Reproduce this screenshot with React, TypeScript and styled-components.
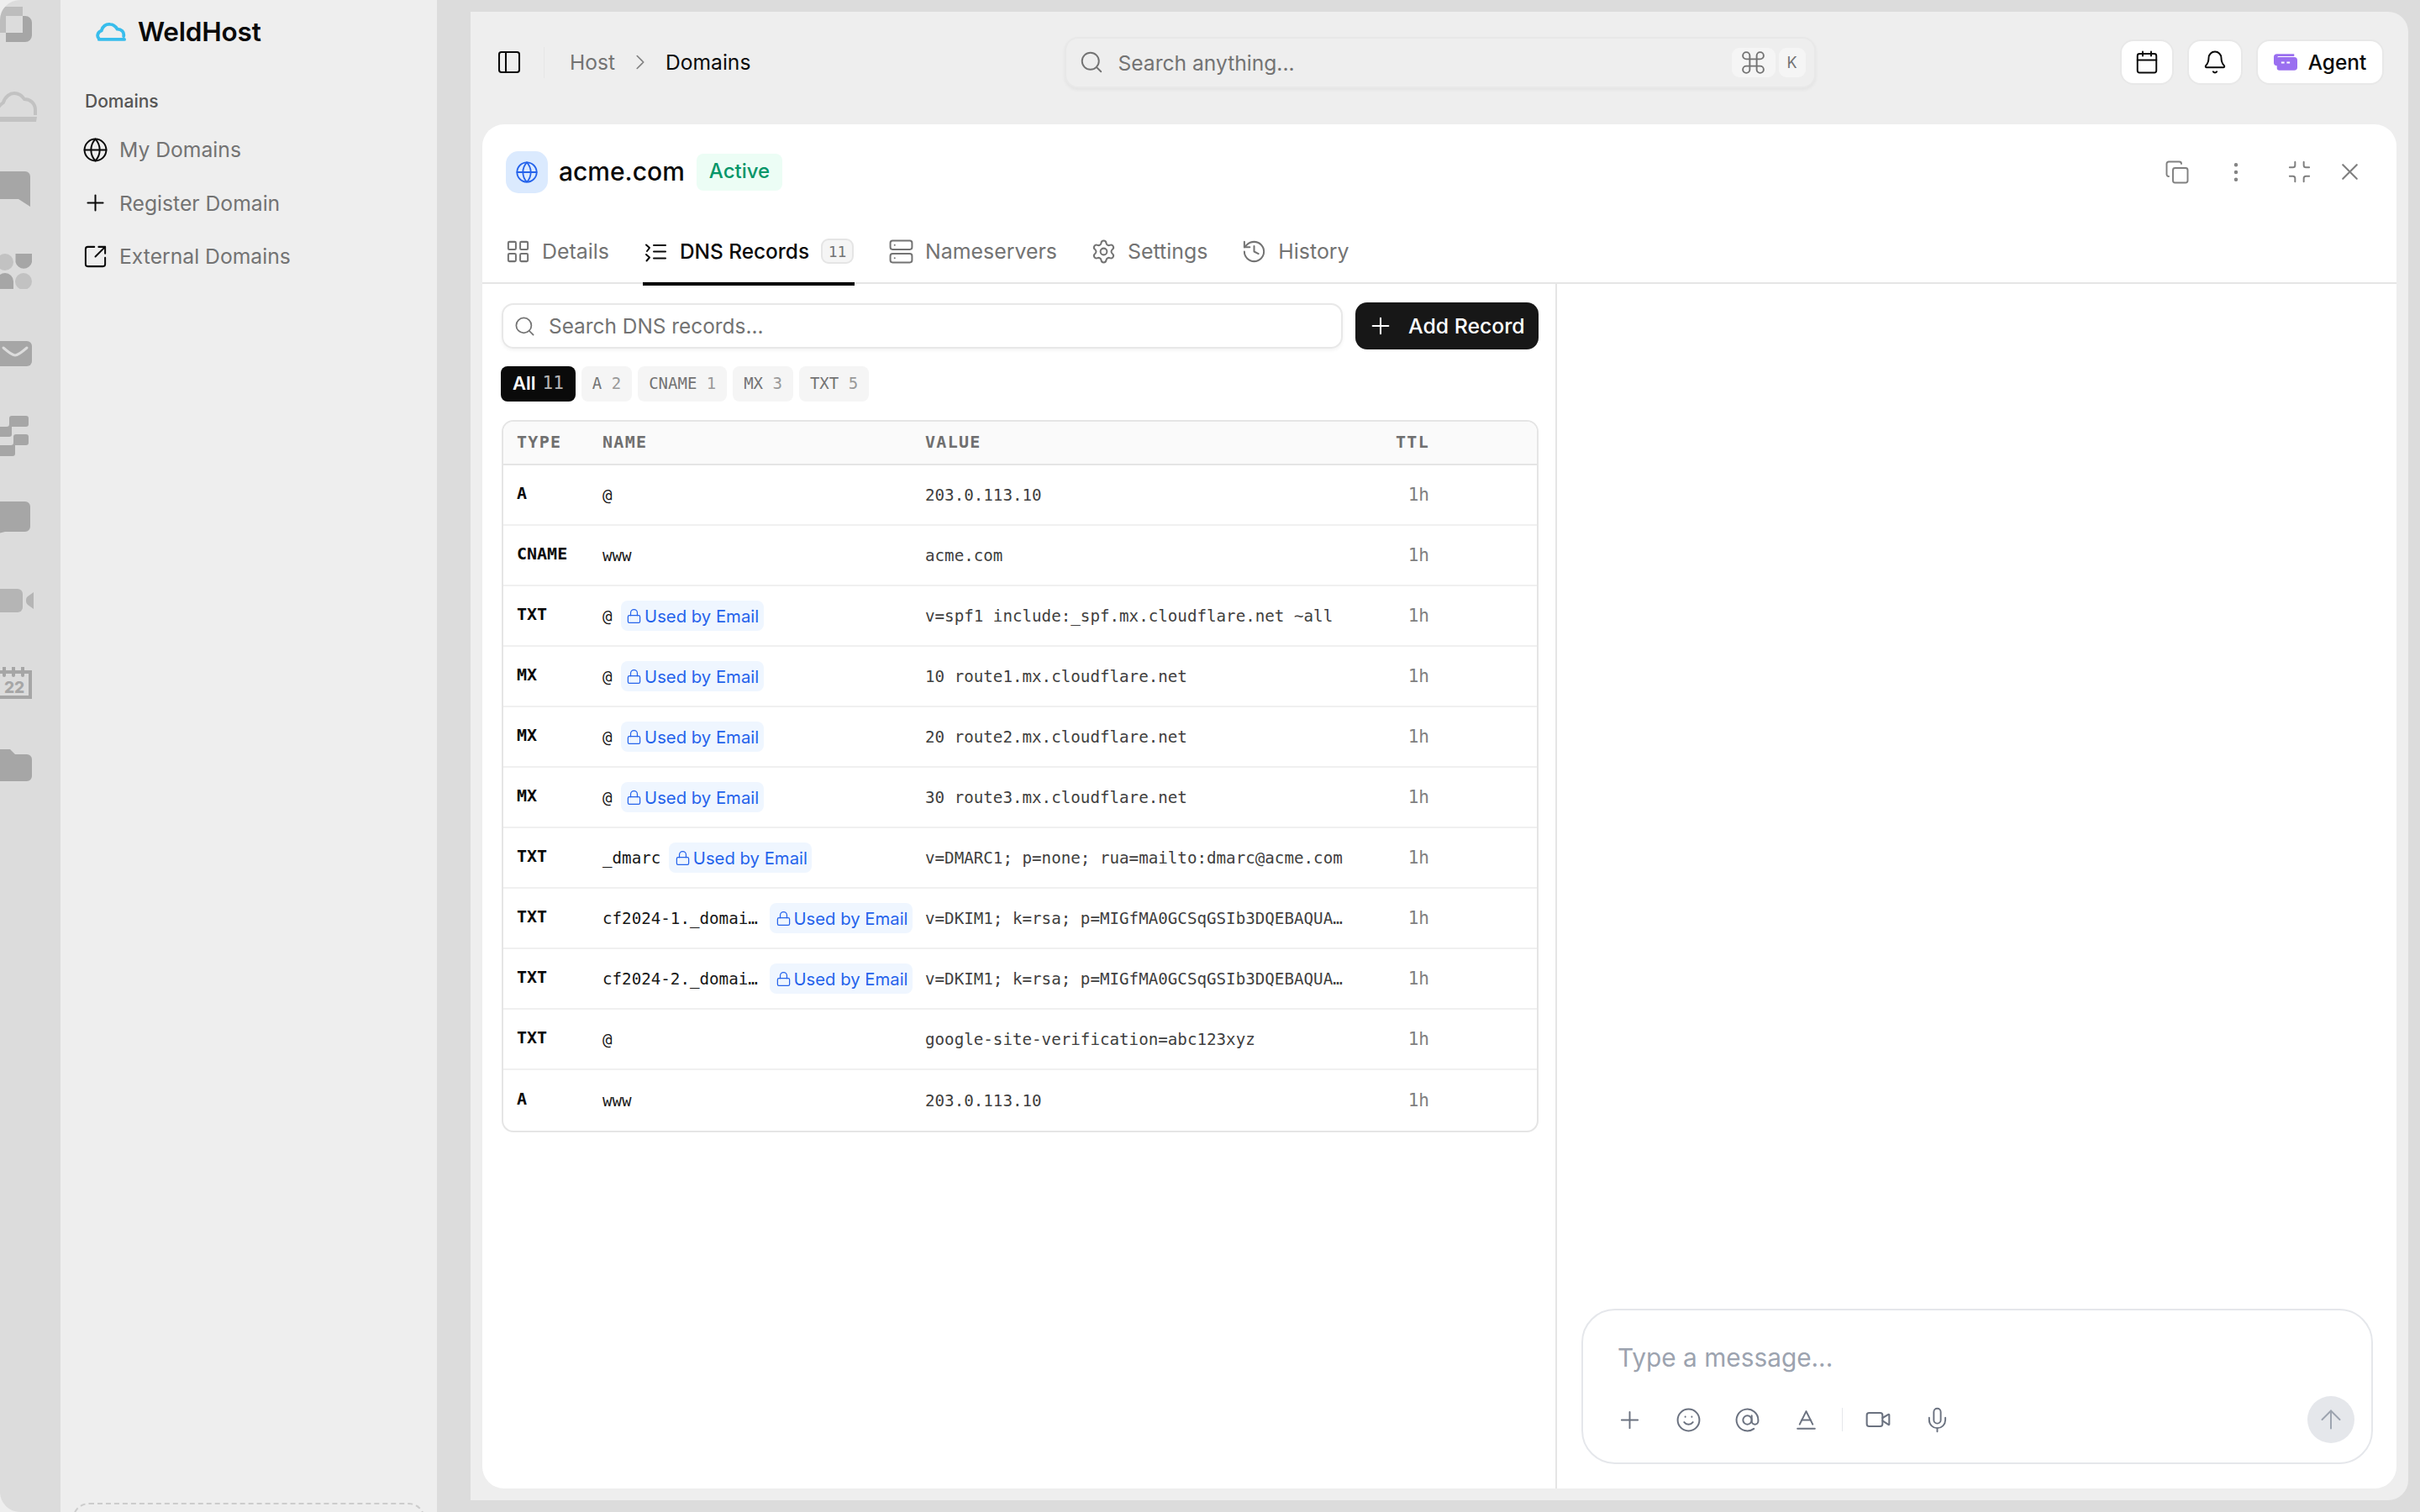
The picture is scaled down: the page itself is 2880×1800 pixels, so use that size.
import React from 'react';
import styled, { createGlobalStyle } from 'styled-components';
import {
  ArrowUp,
  AtSign,
  Baseline,
  Bell,
  Calendar,
  ChevronRight,
  Command,
  Copy,
  EllipsisVertical,
  Globe,
  History,
  LayoutGrid,
  Lock,
  Mic,
  Minimize,
  PanelLeft,
  Plus,
  Search,
  Server,
  Settings,
  Smile,
  SquareArrowOutUpRight,
  Video,
  X,
} from 'lucide-react';

const SANS = '"Inter", "Liberation Sans", sans-serif';
const MONO = '"DejaVu Sans Mono", "Liberation Mono", monospace';
const STROKE = 1.55;

const GlobalStyle = createGlobalStyle`
  html, body {
    margin: 0;
    padding: 0;
    background: #eeeeee;
    font-family: ${SANS};
  }
  * {
    box-sizing: border-box;
  }
`;

const Page = styled.div`
  display: flex;
  width: 2880px;
  height: 1800px;
  overflow: hidden;
`;

const Rail = styled.nav`
  flex: 0 0 72px;
  display: flex;
  flex-direction: column;
  background: #dcdcdc;
  border-radius: 24px 0 0 24px;
  overflow: hidden;
`;

const RailCell = styled.div`
  flex: 0 0 98px;
  display: flex;
  align-items: center;
  margin-left: -10px;
  &:first-child {
    margin-top: -20px;
  }
`;

const Sidebar = styled.aside`
  position: relative;
  flex: 0 0 448px;
  background: #eeeeee;
  border-radius: 14px 0 0 0;
  display: flex;
  flex-direction: column;
  padding: 0 29px;
`;

const Brand = styled.div`
  display: flex;
  align-items: center;
  gap: 14px;
  height: 74px;
  padding-left: 13px;
  font-size: 31.5px;
  font-weight: 600;
  color: #0a0a0a;
  letter-spacing: -0.2px;
`;

const SectionLabel = styled.div`
  margin-top: 34px;
  font-size: 21px;
  font-weight: 500;
  color: #555555;
  line-height: 26px;
`;

const NavList = styled.div`
  display: flex;
  flex-direction: column;
  margin-top: 24px;
  gap: 23.5px;
`;

const NavItem = styled.div`
  display: flex;
  align-items: center;
  gap: 13px;
  height: 40px;
  font-size: 24.7px;
  color: #737373;
  svg {
    color: #0a0a0a;
    flex: 0 0 31px;
    margin-left: -3px;
  }
`;

const DashedBox = styled.div`
  position: absolute;
  left: 14px;
  right: 14px;
  top: 1789px;
  height: 120px;
  border: 2px dashed #cccccc;
  border-radius: 20px;
`;

const ContentArea = styled.div`
  flex: 1;
  min-width: 0;
  background: #dcdcdc;
  padding: 14px 14px 14px 40px;
  display: flex;
`;

const Main = styled.main`
  flex: 1;
  min-width: 0;
  background: #eeeeee;
  border-radius: 0 24px 24px 0;
  padding: 0 14px 14px;
  display: flex;
  flex-direction: column;
`;

const TopBar = styled.header`
  flex: 0 0 134px;
  display: grid;
  grid-template-columns: 1fr 894px 1fr;
  align-items: center;
  padding: 0 15px 14px 16px;
`;

const Crumbs = styled.div`
  display: flex;
  align-items: center;
  font-size: 24.6px;
`;

const CrumbDivider = styled.span`
  width: 1px;
  height: 37px;
  margin: 0 30px 0 25px;
  background: #e6e6e6;
`;

const CrumbMuted = styled.span`
  color: #737373;
`;

const CrumbCurrent = styled.span`
  color: #0a0a0a;
`;

const CrumbArrow = styled.span`
  display: flex;
  margin: 0 15px;
  color: #808080;
`;

const GlobalSearch = styled.div`
  height: 61px;
  display: flex;
  align-items: center;
  gap: 17px;
  padding: 0 10px 0 15px;
  background: #eeeeee;
  border: 2px solid #e8e8e8;
  border-radius: 16px;
  box-shadow: 0 2px 4px rgba(0, 0, 0, 0.05);
  color: #737373;
  font-size: 24.6px;
`;

const SearchText = styled.span`
  flex: 1;
  padding-top: 2px;
`;

const KeyGroup = styled.span`
  display: flex;
  gap: 4px;
`;

const KeyChip = styled.span<{ $wide?: boolean }>`
  width: ${(props) => (props.$wide ? 52 : 32)}px;
  height: 35px;
  display: flex;
  align-items: center;
  justify-content: center;
  background: #f5f5f5;
  border-radius: 9px;
  color: #737373;
  font-size: 18px;
`;

const TopActions = styled.div`
  display: flex;
  justify-content: flex-end;
  gap: 16px;
`;

const TopButton = styled.button<{ $width: number }>`
  width: ${(props) => props.$width}px;
  height: 54px;
  display: flex;
  align-items: center;
  justify-content: center;
  gap: 13px;
  padding: 0;
  background: #ffffff;
  border: 2px solid #e8e8e8;
  border-radius: 16px;
  color: #0a0a0a;
  font-family: ${SANS};
  font-size: 24.4px;
  font-weight: 500;
`;

const Card = styled.section`
  flex: 1;
  min-height: 0;
  display: flex;
  flex-direction: column;
  background: #ffffff;
  border-radius: 26px;
  overflow: hidden;
`;

const CardHeader = styled.div`
  flex: 0 0 190px;
  display: flex;
  flex-direction: column;
  border-bottom: 2px solid #e5e5e5;
`;

const TitleRow = styled.div`
  flex: 0 0 121px;
  display: flex;
  align-items: center;
  padding: 0 39px 8px 28px;
`;

const TitleIcon = styled.div`
  width: 50px;
  height: 50px;
  display: flex;
  align-items: center;
  justify-content: center;
  background: #dbeafe;
  border-radius: 15px;
  color: #2563eb;
`;

const Title = styled.h1`
  margin: -2px 14px 0 13px;
  font-size: 30px;
  font-weight: 500;
  color: #0a0a0a;
`;

const StatusBadge = styled.span`
  height: 44px;
  padding: 0 15px 2px;
  display: flex;
  align-items: center;
  background: #ecfdf5;
  border-radius: 8px;
  color: #059669;
  font-size: 24px;
  font-weight: 500;
`;

const HeaderActions = styled.div`
  margin-left: auto;
  display: flex;
  align-items: center;
  color: #808080;
`;

const HeaderAction = styled.span<{ $gap: number }>`
  display: flex;
  margin-left: ${(props) => props.$gap}px;
`;

const Tabs = styled.div`
  flex: 1;
  display: flex;
  gap: 40px;
  padding-left: 27px;
`;

const Tab = styled.div<{ $active?: boolean }>`
  position: relative;
  display: flex;
  align-items: center;
  gap: 13px;
  padding-bottom: 7px;
  font-size: ${(props) => (props.$active ? 24.4 : 24.9)}px;
  font-weight: ${(props) => (props.$active ? 500 : 400)};
  color: ${(props) => (props.$active ? '#0a0a0a' : '#737373')};
  ${(props) => props.$active && `
    &::after {
      content: '';
      position: absolute;
      left: 0;
      right: 0;
      bottom: -4px;
      height: 4px;
      background: #000000;
    }
  `}
`;

const TabCount = styled.span`
  width: 39px;
  height: 30px;
  margin-left: 1px;
  margin-right: 1px;
  display: flex;
  align-items: center;
  justify-content: center;
  background: #f5f5f5;
  border: 2px solid #e5e5e5;
  border-radius: 9px;
  font-family: ${MONO};
  font-size: 18px;
  font-weight: 400;
  color: #737373;
`;

const Panes = styled.div`
  flex: 1;
  min-height: 0;
  display: flex;
`;

const RecordsPane = styled.div`
  flex: 0 0 1279px;
  padding: 22px 20px 0 23px;
  border-right: 2px solid #e5e5e5;
`;

const SearchRow = styled.div`
  display: flex;
  align-items: center;
  gap: 15px;
`;

const RecordSearch = styled.div`
  flex: 1;
  height: 54px;
  display: flex;
  align-items: center;
  gap: 15px;
  padding: 0 12px;
  border: 2px solid #e8e8e8;
  border-radius: 14px;
  box-shadow: 0 2px 4px rgba(0, 0, 0, 0.05);
  color: #737373;
  font-size: 24.4px;
`;

const AddButton = styled.button`
  flex: 0 0 218px;
  height: 56px;
  display: flex;
  align-items: center;
  gap: 17px;
  padding: 0 0 0 14px;
  background: #171717;
  border: none;
  border-radius: 14px;
  color: #ffffff;
  font-family: ${SANS};
  font-size: 24.8px;
  font-weight: 500;
`;

const Filters = styled.div`
  display: flex;
  gap: 7px;
  margin: 20px 0 22px -1px;
`;

const FilterChip = styled.span<{ $active?: boolean }>`
  height: 42px;
  padding: 0 ${(props) => (props.$active ? 14 : 13)}px 2px;
  display: flex;
  align-items: center;
  gap: ${(props) => (props.$active ? 8 : 11.4)}px;
  border-radius: 8px;
  background: ${(props) => (props.$active ? '#0a0a0a' : '#f5f5f5')};
  color: ${(props) => (props.$active ? '#ffffff' : '#737373')};
  font-family: ${(props) => (props.$active ? SANS : MONO)};
  font-size: ${(props) => (props.$active ? 22 : 19)}px;
  font-weight: ${(props) => (props.$active ? 600 : 400)};
`;

const FilterCount = styled.span<{ $active?: boolean }>`
  font-family: ${MONO};
  font-size: ${(props) => (props.$active ? 21 : 19)}px;
  font-weight: 400;
  opacity: 0.7;
`;

const Table = styled.div`
  border: 2px solid #e5e5e5;
  border-radius: 14px;
  overflow: hidden;
`;

const TableGrid = styled.div`
  display: grid;
  grid-template-columns: 102px 384px 536px 96px 1fr;
  align-items: center;
`;

const HeadRow = styled(TableGrid)`
  height: 52px;
  padding-bottom: 2px;
  background: #fafafa;
  border-bottom: 2px solid #e5e5e5;
`;

const HeadCell = styled.div<{ $right?: boolean }>`
  padding: 0 16px;
  font-family: ${MONO};
  font-size: 20px;
  font-weight: 700;
  letter-spacing: 1.3px;
  color: #6f6f6f;
  text-align: ${(props) => (props.$right ? 'right' : 'left')};
`;

const Row = styled(TableGrid)`
  height: 72px;
  border-bottom: 2px solid #f0f0f0;
  &:last-child {
    border-bottom: none;
  }
`;

const TypeCell = styled.div`
  padding: 0 0 4px 16px;
  font-family: ${MONO};
  font-size: 20px;
  font-weight: 700;
  color: #0a0a0a;
`;

const NameCell = styled.div`
  display: flex;
  align-items: center;
  gap: 10px;
  padding: 0 0 0 16px;
  min-width: 0;
`;

const NameText = styled.span<{ $clipped?: boolean }>`
  flex: ${(props) => (props.$clipped ? '0 0 189px' : '0 0 auto')};
  white-space: nowrap;
  font-family: ${MONO};
  font-size: 19.2px;
  color: #171717;
`;

const EmailBadge = styled.span`
  flex: 0 0 170px;
  height: 36px;
  display: flex;
  align-items: center;
  gap: 3px;
  padding-left: 6.5px;
  background: #eff6ff;
  border-radius: 8px;
  color: #2563eb;
  font-size: 20.3px;
  white-space: nowrap;
`;

const ValueCell = styled.div`
  padding: 0 16px;
  white-space: nowrap;
  font-family: ${MONO};
  font-size: 19.2px;
  color: #404040;
`;

const TtlCell = styled.div`
  padding: 0 16px 0 0;
  text-align: right;
  font-family: ${MONO};
  font-size: 21px;
  color: #808080;
`;

const ChatPane = styled.div`
  flex: 1;
  min-width: 0;
  display: flex;
  flex-direction: column;
  justify-content: flex-end;
  padding: 0 28px 29px 29px;
`;

const Composer = styled.div`
  height: 185px;
  display: flex;
  flex-direction: column;
  padding: 0 20px 23px 41px;
  border: 2px solid #e5e7eb;
  border-radius: 40px;
`;

const ComposerText = styled.div`
  flex: 1;
  padding-top: 36px;
  font-size: 29.8px;
  line-height: 40px;
  color: #9ca3af;
`;

const ComposerTools = styled.div`
  display: flex;
  align-items: center;
  color: #6b7280;
`;

const ToolSlot = styled.span<{ $first?: boolean }>`
  flex: 0 0 70px;
  display: flex;
  justify-content: center;
  margin-left: ${(props) => (props.$first ? -21 : 0)}px;
`;

const ToolDivider = styled.span`
  width: 1px;
  height: 28px;
  margin: 0 7.5px;
  background: #e5e7eb;
`;

const SendButton = styled.button`
  width: 56px;
  height: 56px;
  margin-left: auto;
  display: flex;
  align-items: center;
  justify-content: center;
  padding: 0;
  background: #e5e7eb;
  border: none;
  border-radius: 50%;
  color: #9ca3af;
`;

const RailLogo = () => (
  <svg width="48" height="42" viewBox="0 0 48 42">
    <path d="M8 0h29v11H17v20H8a8 8 0 0 1-8-8V8a8 8 0 0 1 8-8z" fill="#bdbdbd" />
    <path d="M37 11h3a8 8 0 0 1 8 8v15a8 8 0 0 1-8 8H17V31h20z" fill="#a6a6a6" />
  </svg>
);

const RailCloud = () => (
  <svg width="54" height="36" viewBox="0 0 54 36">
    <path d="M6 26c0-7 4-10 8-13 2-7 8-11 13-11 6 0 10 4 12 7 7 0 13 5 13 13v6" fill="none" stroke="#c2c2c2" strokeWidth="4" />
    <path d="M0 30h54l-1 6H0z" fill="#c2c2c2" />
  </svg>
);

const RailBubble = () => (
  <svg width="46" height="42" viewBox="0 0 46 42">
    <path d="M6 0h34a6 6 0 0 1 6 6v36l-14-9H6a6 6 0 0 1-6-6V6a6 6 0 0 1 6-6z" fill="#a6a6a6" />
  </svg>
);

const RailApps = () => (
  <svg width="48" height="42" viewBox="0 0 48 42">
    <circle cx="16" cy="10" r="10" fill="#c2c2c2" />
    <path d="M28.500 0H48v10a10 10 0 0 1-19.500 0z" fill="#a6a6a6" />
    <path d="M6 42V33a10 10 0 0 1 20 0v9z" fill="#a6a6a6" />
    <circle cx="38" cy="33" r="10" fill="#c2c2c2" />
  </svg>
);

const RailMail = () => (
  <svg width="48" height="30" viewBox="0 0 48 30">
    <rect width="48" height="30" rx="6" fill="#a6a6a6" />
    <path d="M14 8c8 7 12 9 14 9s6-2 14-9" fill="none" stroke="#dcdcdc" strokeWidth="3" strokeLinecap="round" />
  </svg>
);

const RailFlow = () => (
  <svg width="44" height="48" viewBox="0 0 44 48">
    <path d="M21 3a3 3 0 0 1 3-3h17a3 3 0 0 1 3 3v7a3 3 0 0 1-3 3H24v9a3 3 0 0 1-3 3H0V13h18a3 3 0 0 0 3-3z" fill="#a6a6a6" />
    <path d="M26 25a3 3 0 0 1 3-3h12a3 3 0 0 1 3 3v7a3 3 0 0 1-3 3H28v10a3 3 0 0 1-3 3H0V35h23a3 3 0 0 0 3-3z" fill="#a6a6a6" />
  </svg>
);

const RailChat = () => (
  <svg width="46" height="40" viewBox="0 0 46 40">
    <path d="M8 0h32a6 6 0 0 1 6 6v24a6 6 0 0 1-6 6H16L0 40V8a8 8 0 0 1 8-8z" fill="#a6a6a6" />
  </svg>
);

const RailVideo = () => (
  <svg width="50" height="28" viewBox="0 0 50 28">
    <path d="M0 0h31a6 6 0 0 1 6 6v16a6 6 0 0 1-6 6H0z" fill="#b5b5b5" />
    <path d="M50 4v20l-7-5a5 5 0 0 1-2-4v-2a5 5 0 0 1 2-4z" fill="#b5b5b5" />
  </svg>
);

const RailCalendar = () => (
  <svg width="48" height="38" viewBox="0 0 48 38">
    <path d="M0 4h48v34H0z M4 8v26h40V8z" fillRule="evenodd" fill="#a6a6a6" />
    <path d="M15 0v10M26 0v10M37 0v10" stroke="#a6a6a6" strokeWidth="4" strokeLinecap="round" />
    <text x="27" y="31" textAnchor="middle" fontFamily={SANS} fontSize="19" fontWeight="800" fill="#a6a6a6">22</text>
  </svg>
);

const RailFolder = () => (
  <svg width="48" height="38" viewBox="0 0 48 38">
    <path d="M6 0h16l6 6h14a6 6 0 0 1 6 6v20a6 6 0 0 1-6 6H0V6a6 6 0 0 1 6-6z" fill="#a6a6a6" />
  </svg>
);

const railIcons = [RailLogo, RailCloud, RailBubble, RailApps, RailMail, RailFlow, RailChat, RailVideo, RailCalendar, RailFolder];

const BrandCloud = () => (
  <svg width="36" height="23" viewBox="0 0 38 24" fill="none" stroke="#38bdec" strokeWidth="4" strokeLinecap="round">
    <path d="M4 21c-3-3-2-8 3-10 1-5 6-9 11-8 4 0 7 3 9 6 5 0 9 3 8 9" />
    <path d="M4 22h32" />
  </svg>
);

const AgentIcon = () => (
  <svg width="28" height="20" viewBox="0 0 30 21">
    <path d="M4 0h22v3h-21v12H4a4 4 0 0 1-4-4V4a4 4 0 0 1 4-4z" fill="#9a6ff0" />
    <path d="M6 4h20a4 4 0 0 1 4 4v9a4 4 0 0 1-4 4H7a3 3 0 0 1-3-3V6a2 2 0 0 1 2-2z" fill="#9a6ff0" />
    <path d="M9.500 11h4M16.500 11h4" stroke="#ffffff" strokeWidth="2" />
  </svg>
);

const RecordsIcon = () => (
  <svg width="31" height="31" viewBox="0 0 31 31" fill="none" stroke="currentColor" strokeWidth="2" strokeLinecap="round" strokeLinejoin="round">
    <path d="M13 8h14M13 15.500h14M13 23.500h14" />
    <path d="M4 7.500l4 3.500-3 4" />
    <path d="M4 19l4 3.500-3.500 4" />
  </svg>
);

interface DnsRecord {
  type: string;
  name: string;
  value: string;
  email?: boolean;
}

const records: DnsRecord[] = [
  { type: 'A', name: '@', value: '203.0.113.10' },
  { type: 'CNAME', name: 'www', value: 'acme.com' },
  { type: 'TXT', name: '@', value: 'v=spf1 include:_spf.mx.cloudflare.net ~all', email: true },
  { type: 'MX', name: '@', value: '10 route1.mx.cloudflare.net', email: true },
  { type: 'MX', name: '@', value: '20 route2.mx.cloudflare.net', email: true },
  { type: 'MX', name: '@', value: '30 route3.mx.cloudflare.net', email: true },
  { type: 'TXT', name: '_dmarc', value: 'v=DMARC1; p=none; rua=mailto:dmarc@acme.com', email: true },
  { type: 'TXT', name: 'cf2024-1._domai…', value: 'v=DKIM1; k=rsa; p=MIGfMA0GCSqGSIb3DQEBAQUA…', email: true },
  { type: 'TXT', name: 'cf2024-2._domai…', value: 'v=DKIM1; k=rsa; p=MIGfMA0GCSqGSIb3DQEBAQUA…', email: true },
  { type: 'TXT', name: '@', value: 'google-site-verification=abc123xyz' },
  { type: 'A', name: 'www', value: '203.0.113.10' },
];

const filters = [
  { label: 'A', count: 2 },
  { label: 'CNAME', count: 1 },
  { label: 'MX', count: 3 },
  { label: 'TXT', count: 5 },
];

const App = () => (
  <>
    <GlobalStyle />
    <Page>
      <Rail>
        {railIcons.map((Icon, i) => (
          <RailCell key={i}>
            <Icon />
          </RailCell>
        ))}
      </Rail>
      <Sidebar>
        <Brand>
          <BrandCloud />
          WeldHost
        </Brand>
        <SectionLabel>Domains</SectionLabel>
        <NavList>
          <NavItem>
            <Globe size={31} strokeWidth={STROKE} />
            My Domains
          </NavItem>
          <NavItem>
            <Plus size={31} strokeWidth={STROKE} />
            Register Domain
          </NavItem>
          <NavItem>
            <SquareArrowOutUpRight size={31} strokeWidth={STROKE} />
            External Domains
          </NavItem>
        </NavList>
        <DashedBox />
      </Sidebar>
      <ContentArea>
        <Main>
          <TopBar>
            <Crumbs>
              <PanelLeft size={32} color="#0a0a0a" strokeWidth={STROKE} />
              <CrumbDivider />
              <CrumbMuted>Host</CrumbMuted>
              <CrumbArrow>
                <ChevronRight size={30} strokeWidth={1.3} />
              </CrumbArrow>
              <CrumbCurrent>Domains</CrumbCurrent>
            </Crumbs>
            <GlobalSearch>
              <Search size={30} strokeWidth={STROKE} />
              <SearchText>Search anything...</SearchText>
              <KeyGroup>
                <KeyChip $wide>
                  <Command size={33} strokeWidth={1.4} />
                </KeyChip>
                <KeyChip>K</KeyChip>
              </KeyGroup>
            </GlobalSearch>
            <TopActions>
              <TopButton $width={64}>
                <Calendar size={30} strokeWidth={STROKE} />
              </TopButton>
              <TopButton $width={66}>
                <Bell size={30} strokeWidth={STROKE} />
              </TopButton>
              <TopButton $width={152}>
                <AgentIcon />
                Agent
              </TopButton>
            </TopActions>
          </TopBar>
          <Card>
            <CardHeader>
              <TitleRow>
                <TitleIcon>
                  <Globe size={28} strokeWidth={STROKE} />
                </TitleIcon>
                <Title>acme.com</Title>
                <StatusBadge>Active</StatusBadge>
                <HeaderActions>
                  <HeaderAction $gap={0}>
                    <Copy size={30} strokeWidth={STROKE} />
                  </HeaderAction>
                  <HeaderAction $gap={40}>
                    <EllipsisVertical size={30} strokeWidth={STROKE} />
                  </HeaderAction>
                  <HeaderAction $gap={45}>
                    <Minimize size={31} strokeWidth={STROKE} />
                  </HeaderAction>
                  <HeaderAction $gap={28}>
                    <X size={33} strokeWidth={STROKE} />
                  </HeaderAction>
                </HeaderActions>
              </TitleRow>
              <Tabs>
                <Tab>
                  <LayoutGrid size={31} strokeWidth={STROKE} />
                  Details
                </Tab>
                <Tab $active>
                  <RecordsIcon />
                  DNS Records
                  <TabCount>11</TabCount>
                </Tab>
                <Tab>
                  <Server size={31} strokeWidth={STROKE} />
                  Nameservers
                </Tab>
                <Tab>
                  <Settings size={31} strokeWidth={STROKE} />
                  Settings
                </Tab>
                <Tab>
                  <History size={31} strokeWidth={STROKE} />
                  History
                </Tab>
              </Tabs>
            </CardHeader>
            <Panes>
              <RecordsPane>
                <SearchRow>
                  <RecordSearch>
                    <Search size={27} strokeWidth={STROKE} />
                    Search DNS records...
                  </RecordSearch>
                  <AddButton>
                    <Plus size={32} strokeWidth={STROKE} />
                    Add Record
                  </AddButton>
                </SearchRow>
                <Filters>
                  <FilterChip $active>
                    All
                    <FilterCount $active>11</FilterCount>
                  </FilterChip>
                  {filters.map((f) => (
                    <FilterChip key={f.label}>
                      {f.label}
                      <FilterCount>{f.count}</FilterCount>
                    </FilterChip>
                  ))}
                </Filters>
                <Table>
                  <HeadRow>
                    <HeadCell>TYPE</HeadCell>
                    <HeadCell>NAME</HeadCell>
                    <HeadCell>VALUE</HeadCell>
                    <HeadCell $right>TTL</HeadCell>
                  </HeadRow>
                  {records.map((r, i) => (
                    <Row key={i}>
                      <TypeCell>{r.type}</TypeCell>
                      <NameCell>
                        <NameText $clipped={r.name.endsWith('…')}>{r.name}</NameText>
                        {r.email && (
                          <EmailBadge>
                            <Lock size={19} strokeWidth={STROKE} />
                            Used by Email
                          </EmailBadge>
                        )}
                      </NameCell>
                      <ValueCell>{r.value}</ValueCell>
                      <TtlCell>1h</TtlCell>
                    </Row>
                  ))}
                </Table>
              </RecordsPane>
              <ChatPane>
                <Composer>
                  <ComposerText>Type a message...</ComposerText>
                  <ComposerTools>
                    <ToolSlot $first>
                      <Plus size={33} strokeWidth={1.4} />
                    </ToolSlot>
                    <ToolSlot>
                      <Smile size={31} strokeWidth={STROKE} />
                    </ToolSlot>
                    <ToolSlot>
                      <AtSign size={31} strokeWidth={STROKE} />
                    </ToolSlot>
                    <ToolSlot>
                      <Baseline size={31} strokeWidth={STROKE} />
                    </ToolSlot>
                    <ToolDivider />
                    <ToolSlot>
                      <Video size={32} strokeWidth={STROKE} />
                    </ToolSlot>
                    <ToolSlot>
                      <Mic size={33} strokeWidth={1.4} />
                    </ToolSlot>
                    <SendButton>
                      <ArrowUp size={36} strokeWidth={1.3} />
                    </SendButton>
                  </ComposerTools>
                </Composer>
              </ChatPane>
            </Panes>
          </Card>
        </Main>
      </ContentArea>
    </Page>
  </>
);

export default App;
